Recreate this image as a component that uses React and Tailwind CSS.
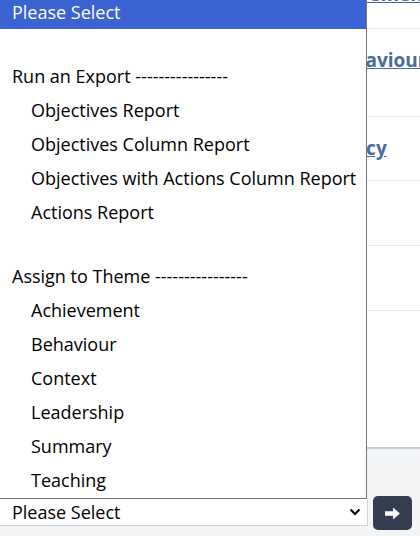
import React from 'react';

const exportItems = [
  'Objectives Report',
  'Objectives Column Report',
  'Objectives with Actions Column Report',
  'Actions Report',
];

const themeItems = ['Achievement', 'Behaviour', 'Context', 'Leadership', 'Summary', 'Teaching'];

const ArrowIcon = () => (
  <svg width="15" height="13" viewBox="0 0 16 14" fill="white">
    <path d="M0 4.5h8.5V0.5L16 7l-7.5 6.5v-4H0z" />
  </svg>
);

const Chevron = () => (
  <svg width="12" height="8" viewBox="0 0 12 8" fill="none" stroke="black" strokeWidth="2.2">
    <path d="M1.5 1.5L6 6l4.5-4.5" />
  </svg>
);

const Row = ({ children, indent, className = '' }) => (
  <div className={`h-[34px] flex items-center whitespace-nowrap ${indent ? 'pl-[31px]' : 'pl-[12px]'} ${className}`}>
    {children}
  </div>
);

export default function App() {
  return (
    <div className="relative w-[420px] h-[536px] overflow-hidden bg-white text-[18px] text-black" style={{ fontFamily: '"Open Sans", sans-serif' }}>
      {/* page behind the dropdown */}
      <div className="flex flex-col h-[447px]">
        <div className="h-[29px] border-b border-[#e5e7eb] overflow-hidden">
          <a className="block -mt-[20px] ml-[306px] font-bold text-[19px] text-[#4b6a9e] underline whitespace-nowrap">Achievement</a>
        </div>
        <div className="h-[88px] border-b border-[#e5e7eb] pt-[17px]">
          <a className="block ml-[329px] font-bold text-[19px] text-[#4b6a9e] underline whitespace-nowrap">Behaviour</a>
        </div>
        <div className="h-[64px] border-b border-[#e5e7eb] flex items-center">
          <a className="ml-[310px] font-bold text-[19px] text-[#4b6a9e] underline whitespace-nowrap">Literacy</a>
        </div>
        <div className="h-[65px] border-b border-[#e5e7eb]" />
        <div className="h-[65px] border-b border-[#e5e7eb]" />
        <div className="flex-1" />
      </div>

      {/* footer */}
      <div className="h-[89px] bg-[#f3f4f6] border-t-2 border-[#c9ccd1] flex items-start pt-[49px]">
        <div className="w-[368px] h-[28px] bg-white border border-[#cdd3dc] border-l-0 flex items-center justify-between pl-[12px] pr-[6px]">
          <span>Please Select</span>
          <Chevron />
        </div>
      </div>
      <button className="absolute left-[373px] top-[496px] w-[39px] h-[34px] rounded-[5px] bg-[#343e50] flex items-center justify-center">
        <ArrowIcon />
      </button>

      {/* open dropdown list */}
      <div className="absolute left-0 top-0 w-[367px] h-[499px] bg-white border-r border-b border-[#767676] overflow-hidden">
        <div className="-mt-[5px]">
          <Row className="bg-[#3b63d2] text-white">Please Select</Row>
          <div className="h-[30px]" />
          <Row>Run an Export ----------------</Row>
          {exportItems.map(item => (
            <Row key={item} indent>{item}</Row>
          ))}
          <div className="h-[30px]" />
          <Row>Assign to Theme ----------------</Row>
          {themeItems.map(item => (
            <Row key={item} indent>{item}</Row>
          ))}
        </div>
      </div>
    </div>
  );
}
